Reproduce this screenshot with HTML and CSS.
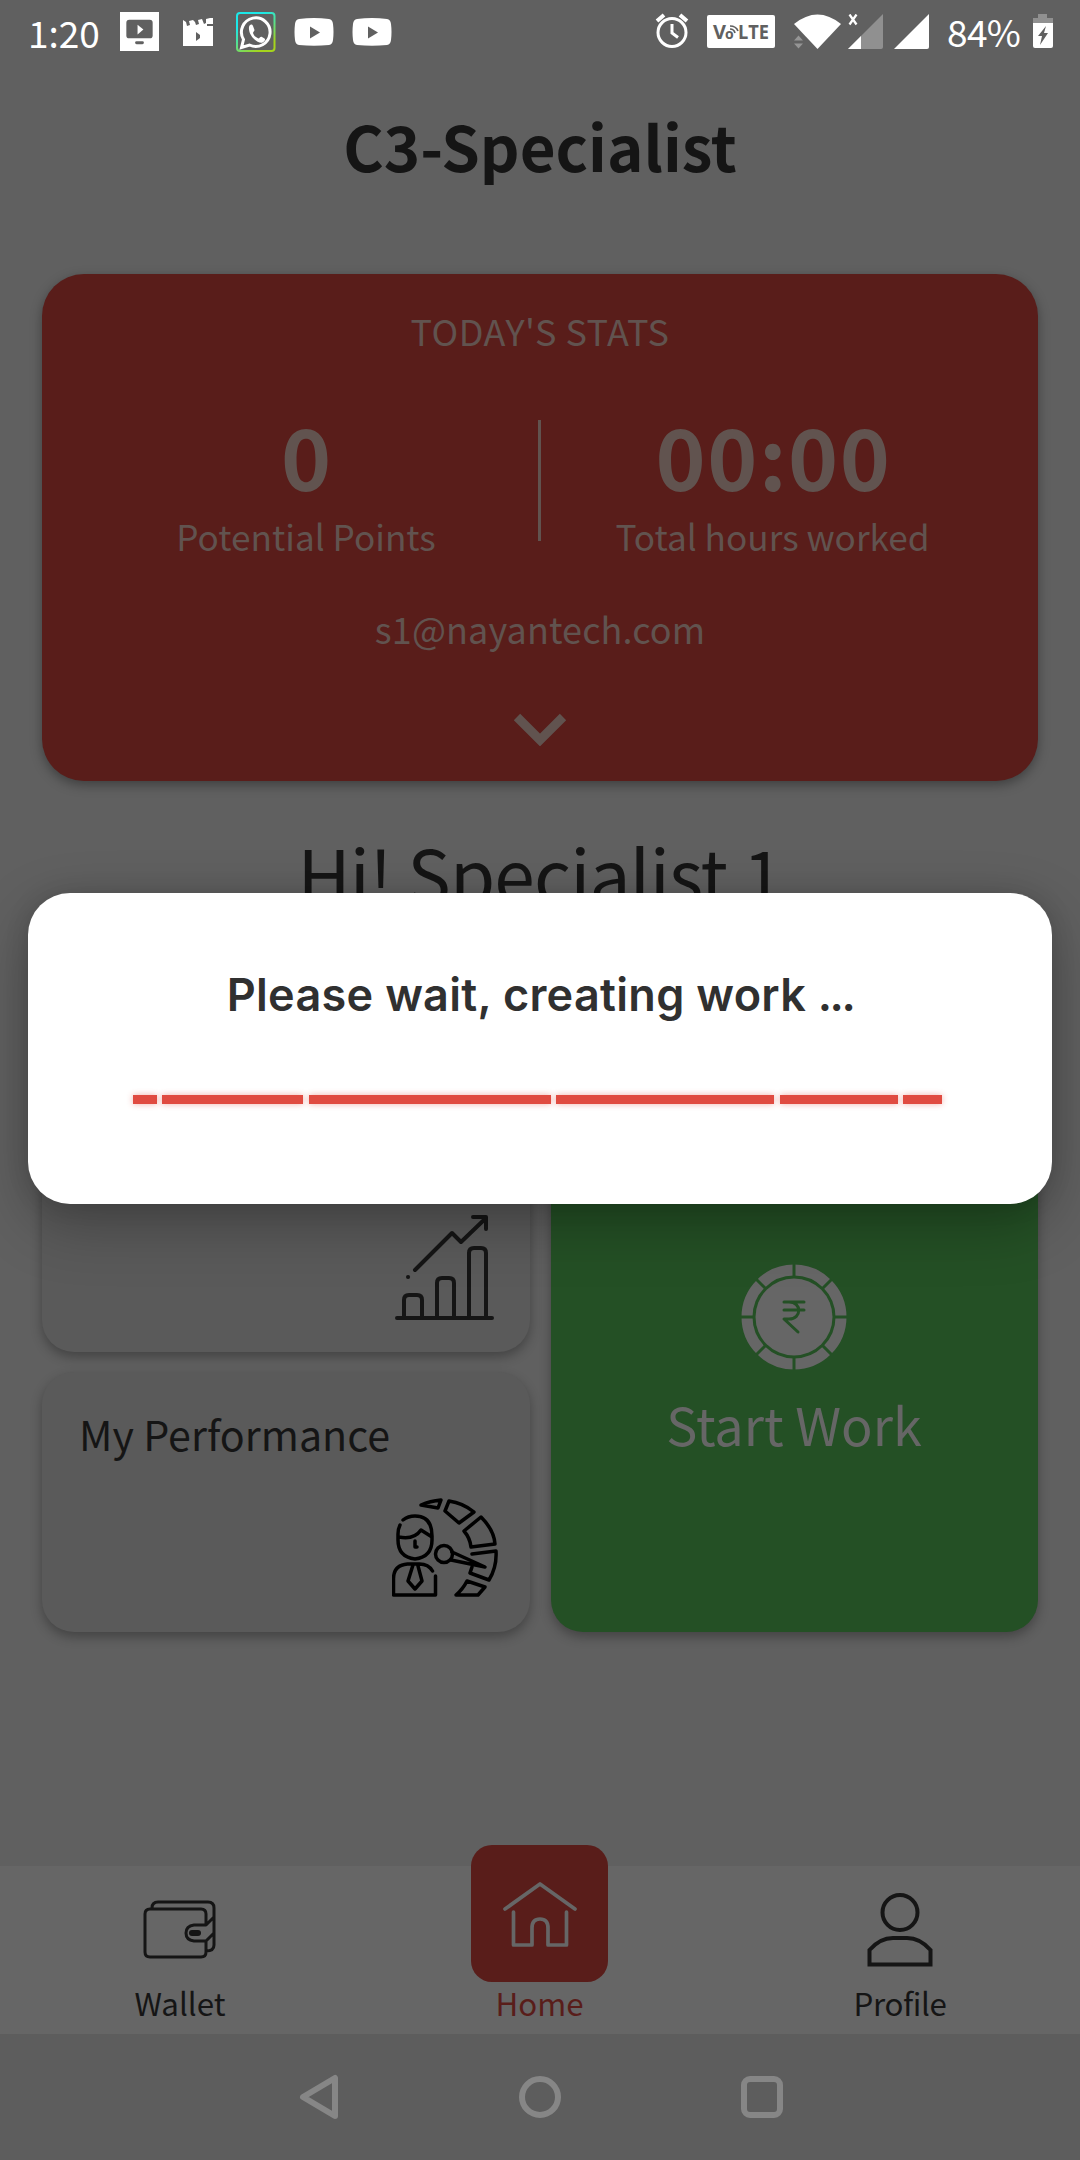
FILE: index.html
```html
<!DOCTYPE html>
<html lang="en">
<head>
<meta charset="utf-8">
<title>C3-Specialist</title>
<link rel="stylesheet" href="styles.css">
</head>
<body>
<div class="screen">
  <header class="status">
    <div class="status-group">
      <span class="clock">1:20</span>
      <svg class="ic-cast" width="39" height="39" viewBox="0 0 40 40"><path fill="#fff" d="M0 0h40v40H0z"/><rect x="6.500" y="8" width="27" height="19" rx="3" fill="#606060"/><path d="M18 13v10l6-5z" fill="#fff"/><path d="M17 31.500h6" stroke="#606060" stroke-width="3" stroke-linecap="round"/></svg>
      <svg class="ic-film" width="30" height="28" viewBox="0 0 30 28"><path fill="#fff" d="M0 2l3 2 1 4 3-1-1-4 4-1 2 2 1 3 3-1-1-4 4-1 2 5 2-1V1l4-1h3v6h-6v2h6v20H0z"/><path fill="#606060" d="M13 14l4 3v3l-4 3z"/></svg>
      <svg class="ic-chat" width="40" height="40" viewBox="0 0 40 40"><defs><linearGradient id="ring" x1="0" y1="0" x2=".6" y2="1"><stop offset=".3" stop-color="#1ce8e8"/><stop offset="1" stop-color="#a5d41c"/></linearGradient></defs><rect x="1" y="1" width="37.500" height="38" rx="3" fill="none" stroke="url(#ring)" stroke-width="2"/><path d="M5.500 35.500l2-8A14.300 14.300 0 1 1 13.500 33z" fill="none" stroke="#fff" stroke-width="3"/><path fill="#fff" d="M13 15c1-3 3-3 4-1l1.500 4c0 1-1.500 2-1.500 3 1 3 3 4.500 5.500 5.500 1 0 2-2.500 3.500-1.500l2.500 1.500c1.500 1-.5 3.500-2 4-5 1.500-14.500-7-13.500-15.500z"/></svg>
      <svg class="ic-tube" width="40" height="28" viewBox="0 0 40 28"><path fill="#fff" d="M5 1Q20-.8 35 1q3.500.5 4 5 1 8 0 16-.5 4.500-4 5-15 1.500-30 0-3.500-.5-4-5-1-8 0-16 .5-4.500 4-5z"/><path fill="#606060" d="M16 8.500v12l10-6z"/></svg>
      <svg class="ic-tube" width="40" height="28" viewBox="0 0 40 28"><path fill="#fff" d="M5 1Q20-.8 35 1q3.500.5 4 5 1 8 0 16-.5 4.500-4 5-15 1.500-30 0-3.500-.5-4-5-1-8 0-16 .5-4.500 4-5z"/><path fill="#606060" d="M16 8.500v12l10-6z"/></svg>
    </div>
    <div class="status-group status-right">
      <svg width="34" height="36" viewBox="0 0 34 36" fill="none" stroke="#fff" stroke-width="3"><circle cx="17" cy="19.500" r="14"/><path d="M17 11v9l6 4.500"/><path d="M2 8l7-6M32 8l-7-6" stroke-width="4"/></svg>
      <svg class="ic-volte" width="68" height="33" viewBox="0 0 68 33"><rect width="68" height="33" rx="2" fill="#fff"/><g fill="#606060" font-family="Open Sans, sans-serif" font-weight="700"><text x="6" y="23.500" font-size="19" textLength="13" lengthAdjust="spacingAndGlyphs">V</text><text x="18" y="24" font-size="14">o</text><text x="31" y="23.500" font-size="19" textLength="31" lengthAdjust="spacingAndGlyphs">LTE</text></g><path d="M23 14q4 0 5 4M23 11q6 0 8 5" fill="none" stroke="#606060" stroke-width="1.700"/></svg>
      <svg class="ic-wifi" width="47" height="35" viewBox="0 0 47 35"><path fill="#fff" d="M0 10Q23.500-9 47 10L23.500 35z"/><path fill="#959595" d="M0 26.500l4.500-5 4.500 5zM0 29.500l4.500 5 4.500-5z"/></svg>
      <svg class="ic-sim1" width="35" height="35" viewBox="0 0 35 35"><path fill="#909090" d="M35 0v33q0 2-2 2H0z"/><path fill="#fff" d="M13 22v13H0z"/><path d="M1.500 .5l7 10M8.500 .5l-7 10" stroke="#fff" stroke-width="2.300"/></svg>
      <svg class="ic-sim2" width="35" height="35" viewBox="0 0 35 35"><path fill="#fff" d="M35 0v33q0 2-2 2H0z"/></svg>
      <span class="battery-level">84%</span>
      <svg class="ic-batt" width="20" height="34" viewBox="0 0 20 34"><path fill="#909090" d="M5 0h9v4h6v6H0V4h5z"/><path fill="#fff" d="M0 9h20v23q0 2-2 2H2q-2 0-2-2z"/><path fill="#606060" d="M13 12L5 22h4l-2 9 8-12h-4z"/></svg>
    </div>
  </header>

  <h1 class="title">C3-Specialist</h1>

  <section class="stats">
    <div class="stats-label">TODAY'S STATS</div>
    <div class="stats-row">
      <div class="stat"><b class="zero">0</b><span class="pp">Potential Points</span></div>
      <div class="divider"></div>
      <div class="stat"><b class="time">00:00</b><span class="hours">Total hours worked</span></div>
    </div>
    <div class="email">s1@nayantech.com</div>
    <svg class="chevron" width="54" height="34" viewBox="0 0 54 34"><path d="M4 5l23 23L50 5" fill="none" stroke="#61534f" stroke-width="9"/></svg>
  </section>

  <h2 class="greeting">Hi! Specialist 1</h2>

  <main class="tiles">
    <div class="tile tile-a">
      <svg class="ic-chart" width="102" height="108" viewBox="0 0 102 108" fill="none" stroke="#151515" stroke-width="4" stroke-linecap="round" stroke-linejoin="round"><path d="M3 105h95M10 104V87q0-5 5-5h8q5 0 5 5v17M43 104V70q0-5 5-5h7q5 0 5 5v34M75 104V40q0-5 5-5h7q5 0 5 5v64M21 57l37-37 9 9L92 5M79 4h13v12"/><path d="M14 64h.1"/></svg>
    </div>
    <div class="tile tile-b">
      <div class="tile-name">My Performance</div>
      <svg class="ic-perf" width="108" height="100" viewBox="0 0 108 100" fill="none" stroke="#000" stroke-width="3.500" stroke-linecap="round" stroke-linejoin="round"><path d="M29 7q9-4 20-5l-3 8zM57 3q14 2 25 11L67 25l-14-12zM89 19q13 13 14 27l-24 3q-1-9-7-16zM80 56l24-3q1 16-7 29l-19-7q1-3 2-6M75 83l18 6-7 8H64q7-6 11-14zM1.500 97V81q0-14 14-15h12q9 0 13 7M43.500 78v19zM43.500 97h-42M21 67l-5 16 7 8 7-8-4-15M11 22q5-4 12-4 17 0 17 20v4q0 17-17 19Q6 59 6 42v-6q0-5 2-9M7 39q15 3 22-7l11 7M23 43v6h2"/><circle cx="52" cy="56" r="8.500"/><path d="M60 54l33 15-34-7"/></svg>
    </div>
    <div class="tile tile-c">
      <svg class="ic-coin" width="106" height="106" viewBox="0 0 106 106"><circle cx="53" cy="53" r="47" fill="none" stroke="#666" stroke-width="11"/><path d="M53 0v12M53 94v12M0 53h12M94 53h12M15.500 15.500l9 9M81.500 81.500l9 9M15.500 90.500l9-9M81.500 24.500l9-9" stroke="#245025" stroke-width="3"/><circle cx="53" cy="53" r="38.500" fill="#666"/><path d="M43 38h20M43 46h20M43 38h5c13 0 13 17 0 17h-5l14 13" fill="none" stroke="#245025" stroke-width="3" stroke-linecap="round" stroke-linejoin="round"/></svg>
      <div class="start">Start Work</div>
    </div>
  </main>

  <nav class="tabs">
    <div class="tab">
      <svg class="ic-wallet" width="74" height="60" viewBox="0 0 74 60" fill="none" stroke="#151515" stroke-width="3" stroke-linejoin="round"><path d="M63 25V14q0-5-5-5H7q-5 0-5 5v38q0 5 5 5h51q5 0 5-5V41M9 8q0-6 6-6h50q6 0 6 6v37q0 6-8 6M71 17l-8 8H51q-8 1-8 8t8 8h12l8-8"/><path d="M49 33h6" stroke-width="6" stroke-linecap="round"/></svg>
      <span class="t-wallet">Wallet</span>
    </div>
    <div class="tab tab-home">
      <div class="home-box"><svg width="74" height="66" viewBox="0 0 74 66" fill="none" stroke="#666" stroke-width="3.700" stroke-linecap="round" stroke-linejoin="round"><path d="M2 28L37 3l35 25M10.500 31v33H29V47q0-9 8-9t8 9v17h18.500V31"/></svg></div>
      <span class="t-home">Home</span>
    </div>
    <div class="tab">
      <svg class="ic-user" width="66" height="74" viewBox="0 0 66 74" fill="none" stroke="#151515" stroke-width="4"><circle cx="33" cy="19.500" r="17.500"/><path d="M2.500 71.500V57Q13 45 26 45h14q13 0 23.500 12v14.500z"/></svg>
      <span class="t-profile">Profile</span>
    </div>
  </nav>

  <footer class="sysnav">
    <svg width="40" height="46" viewBox="0 0 40 46"><path d="M36 4v38L4 23z" fill="none" stroke="#868686" stroke-width="6" stroke-linejoin="round"/></svg>
    <svg width="42" height="42" viewBox="0 0 42 42"><circle cx="21" cy="21" r="18" fill="none" stroke="#868686" stroke-width="6"/></svg>
    <svg width="42" height="42" viewBox="0 0 42 42"><rect x="3" y="3" width="36" height="36" rx="6" fill="none" stroke="#868686" stroke-width="6"/></svg>
  </footer>

  <div class="dialog">
    <div class="dialog-text">Please wait, creating work <span class="dots">...</span></div>
    <div class="progress"><i class="s1"></i><i class="s2"></i><i class="s3"></i><i class="s4"></i><i class="s5"></i><i class="s6"></i></div>
  </div>
</div>
</body>
</html>
```
FILE: styles.css
```css
* { box-sizing: border-box; }
body { margin: 0; }
svg { display: block; flex: none; }
.screen {
  position: relative;
  width: 1080px;
  height: 2160px;
  overflow: hidden;
  display: flex;
  flex-direction: column;
  background: #606060;
  color: #151515;
  font-family: "Noto Sans CJK SC", "Noto Sans", sans-serif;
  font-weight: 400;
  white-space: nowrap;
}

.status { height: 64px; flex: none; display: flex; justify-content: space-between; align-items: flex-start; padding: 0 27px 0 28px; color: #fff; }
.status-group { display: flex; align-items: center; height: 63px; }
.status-right { height: 62px; }
.clock, .battery-level { font-size: 37px; line-height: 58px; }
.clock { width: 92px; }
.ic-film { margin-left: 24px; }
.ic-chat { margin-left: 23px; }
.ic-tube { margin-left: 18px; }
.ic-volte { margin-left: 18px; }
.ic-wifi { margin-left: 19px; }
.ic-sim1 { margin-left: 7px; }
.ic-sim2 { margin-left: 11px; }
.battery-level { margin-left: 18px; width: 86px; letter-spacing: -.6px; }

.title { margin: 51px 0 0; height: 159px; font-size: 61.8px; line-height: 61px; font-weight: 700; text-align: center; }

.stats {
  margin: 0 42px;
  height: 507px;
  flex: none;
  border-radius: 42px;
  background: #591d1a;
  color: #61534f;
  box-shadow: 0 4px 12px rgba(0, 0, 0, .35);
  display: flex;
  flex-direction: column;
  align-items: center;
  font-size: 36px;
}
.stats-label { margin-top: 36px; line-height: 40px; letter-spacing: .45px; }
.stats-row { margin-top: 70px; height: 136px; align-self: stretch; display: grid; grid-template-columns: 496px 3px 1fr; }
.divider { background: #61534f; height: 121px; }
.stat { display: flex; flex-direction: column; align-items: center; font-size: 35.2px; }
.stat b { font-size: 85px; line-height: 68px; letter-spacing: 1.6px; }
.stat span { line-height: 40px; margin-top: 28px; }
.zero, .pp { margin-right: -32px; }
.stat .zero { margin-right: -34px; }
.time, .hours { margin-left: -34px; }
.stat .time { margin-left: -32px; }
.email { margin-top: 52px; line-height: 40px; letter-spacing: .1px; }
.chevron { margin-top: 64px; }

.greeting { margin: 0; padding-top: 51px; height: 279px; font-size: 73px; line-height: 80px; letter-spacing: -.85px; font-weight: 400; text-align: center; }

.tiles {
  height: 572px;
  flex: none;
  padding: 0 42px;
  display: grid;
  grid-template: 292px 260px / 488px 487px;
  gap: 20px 21px;
}
.tile { border-radius: 32px; background: #5a5a5a; box-shadow: 0 5px 12px rgba(0, 0, 0, .3); display: flex; flex-direction: column; }
.tile-a { align-items: flex-end; justify-content: flex-end; padding: 0 34px 31px 0; }
.tile-name { margin: 41px 0 0 37px; font-size: 41.2px; line-height: 40px; }
.ic-perf { margin: 45px 0 0 350px; }
.tile-c { grid-area: 1 / 2 / 3 / 3; background: #245025; color: #666; align-items: center; padding-top: 204px; }
.ic-coin { margin-right: 1px; }
.start { margin-top: 28px; font-size: 52.2px; line-height: 50px; margin-right: 1px; }

.tabs { margin-top: 234px; height: 168px; flex: none; background: #666; display: grid; grid-template: 168px / repeat(3, 1fr); font-size: 31.3px; }
.tab { display: flex; flex-direction: column; align-items: center; justify-content: flex-end; }
.tab span { line-height: 40px; margin-bottom: 11px; }
.tab-home { padding-right: 1px; }
.ic-wallet { margin-bottom: 23px; }
.ic-user { margin-bottom: 16px; }
.t-home { color: #591d1a; }
.t-profile { letter-spacing: -.4px; }
.home-box { width: 137px; height: 137px; flex: none; margin-bottom: 1px; border-radius: 21px; background: #591d1a; display: flex; align-items: center; justify-content: center; }

.sysnav { height: 126px; flex: none; background: #5d5d5d; display: flex; align-items: center; justify-content: space-between; padding: 0 297px 0 299px; }

.dialog {
  position: absolute;
  left: 28px;
  top: 893px;
  width: 1024px;
  height: 311px;
  border-radius: 42px;
  background: #fff;
  box-shadow: 0 20px 60px rgba(0, 0, 0, .28), 0 0 24px rgba(0, 0, 0, .12);
  display: flex;
  flex-direction: column;
  align-items: center;
}
.dialog-text { margin-top: 77px; font: 600 45px/50px Inter, sans-serif; letter-spacing: .3px; color: #303030; }
.dots { letter-spacing: -2.5px; }
.progress { margin: 75px 110px 0 105px; align-self: stretch; display: flex; justify-content: space-between; height: 9px; }
.progress i { background: #e04b41; box-shadow: 0 0 6px rgba(224, 75, 65, .45); }
.s1 { width: 24px; }
.s2 { width: 141px; }
.s3 { width: 242px; }
.s4 { width: 218px; }
.s5 { width: 118px; }
.s6 { width: 39px; }
```
